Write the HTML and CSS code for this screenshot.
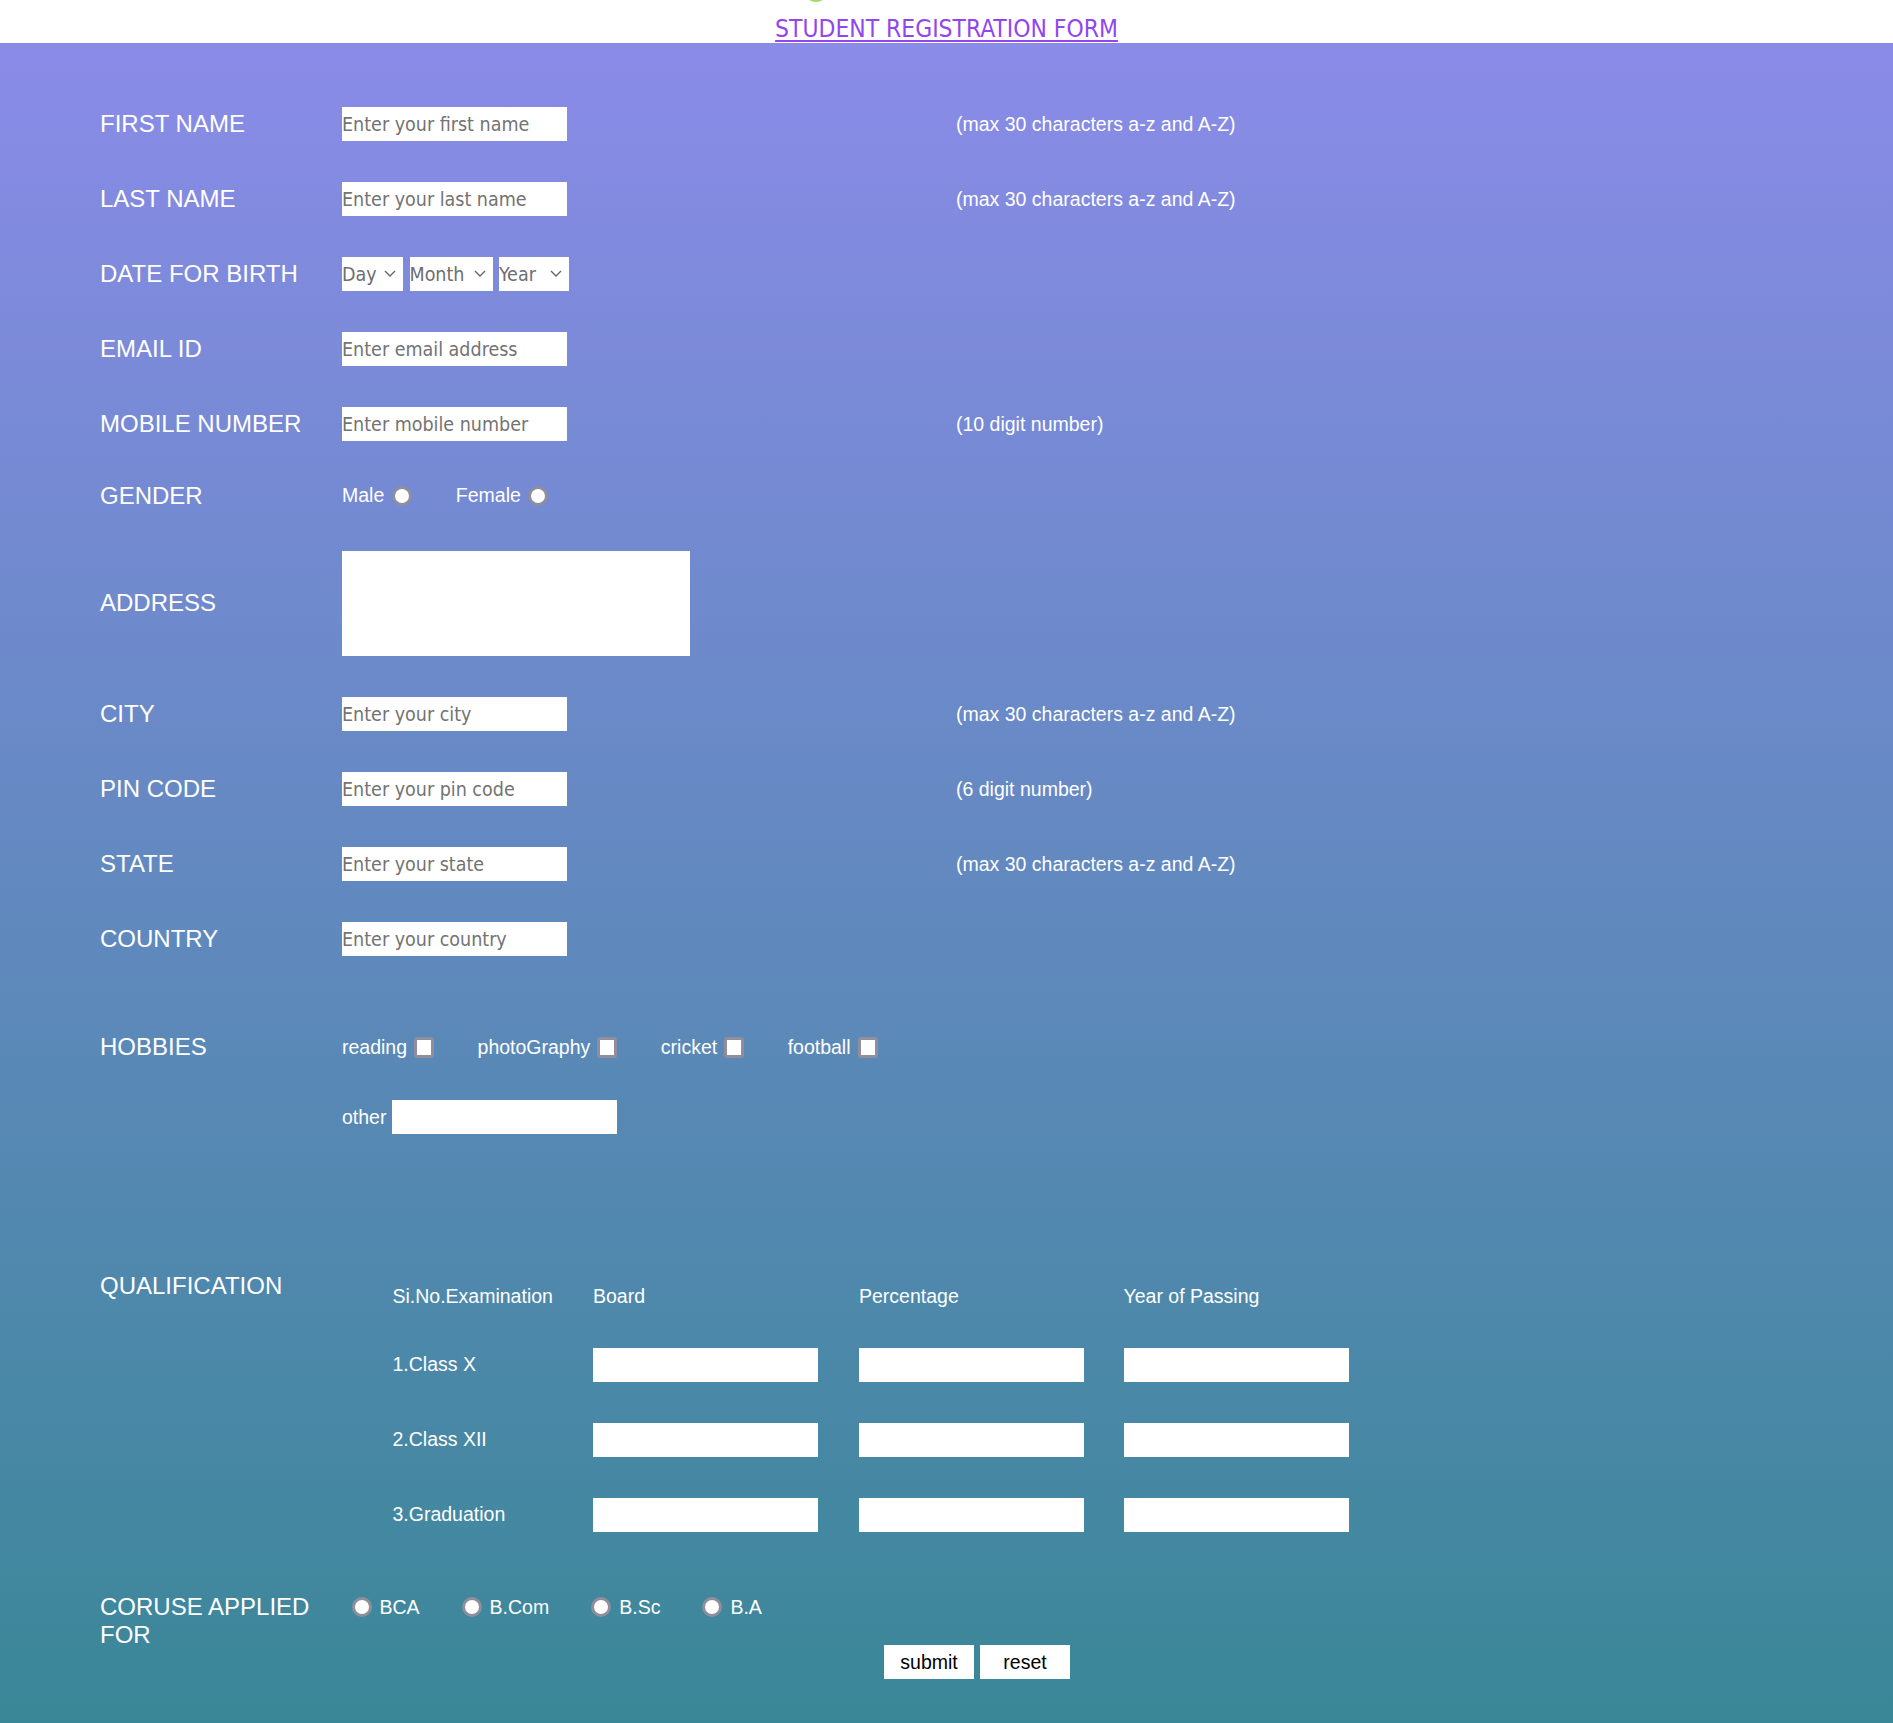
FILE: index.html
```html
<!DOCTYPE html>
<html lang="en">
<head>
<meta charset="utf-8">
<title>Student Registration Form</title>
<link rel="stylesheet" href="styles.css">
</head>
<body>
<header class="top">
  <span class="sliver"></span>
  <a href="#" class="title">STUDENT REGISTRATION FORM</a>
</header>
<form class="reg">
  <div class="row">
    <label class="lbl">FIRST NAME</label>
    <div class="field"><input type="text" class="txt" placeholder="Enter your first name"></div>
    <span class="hint">(max 30 characters a-z and A-Z)</span>
  </div>
  <div class="row">
    <label class="lbl">LAST NAME</label>
    <div class="field"><input type="text" class="txt" placeholder="Enter your last name"></div>
    <span class="hint">(max 30 characters a-z and A-Z)</span>
  </div>
  <div class="row">
    <label class="lbl">DATE FOR BIRTH</label>
    <div class="field dob">
      <div class="sel sel-day">
        <select><option>Day</option><option>1</option><option>2</option><option>3</option></select>
        <svg class="chev" width="12" height="7" viewBox="0 0 12 7"><polyline points="1,1 6,6 11,1" fill="none" stroke="#666" stroke-width="1.4"/></svg>
      </div>
      <div class="sel sel-month">
        <select><option>Month</option><option>Jan</option><option>Feb</option><option>Mar</option></select>
        <svg class="chev" width="12" height="7" viewBox="0 0 12 7"><polyline points="1,1 6,6 11,1" fill="none" stroke="#666" stroke-width="1.4"/></svg>
      </div>
      <div class="sel sel-year">
        <select><option>Year</option><option>2000</option><option>2001</option><option>2002</option></select>
        <svg class="chev" width="12" height="7" viewBox="0 0 12 7"><polyline points="1,1 6,6 11,1" fill="none" stroke="#666" stroke-width="1.4"/></svg>
      </div>
    </div>
    <span class="hint"></span>
  </div>
  <div class="row">
    <label class="lbl">EMAIL ID</label>
    <div class="field"><input type="text" class="txt" placeholder="Enter email address"></div>
    <span class="hint"></span>
  </div>
  <div class="row">
    <label class="lbl">MOBILE NUMBER</label>
    <div class="field"><input type="text" class="txt" placeholder="Enter mobile number"></div>
    <span class="hint">(10 digit number)</span>
  </div>
  <div class="row row-gender">
    <label class="lbl">GENDER</label>
    <div class="field inline">
      <span class="opt">Male</span><input type="radio" name="gender" class="rad rad-after">
      <span class="opt">Female</span><input type="radio" name="gender" class="rad rad-after">
    </div>
    <span class="hint"></span>
  </div>
  <div class="row row-address">
    <label class="lbl">ADDRESS</label>
    <div class="field"><textarea class="area"></textarea></div>
    <span class="hint"></span>
  </div>
  <div class="row">
    <label class="lbl">CITY</label>
    <div class="field"><input type="text" class="txt" placeholder="Enter your city"></div>
    <span class="hint">(max 30 characters a-z and A-Z)</span>
  </div>
  <div class="row">
    <label class="lbl">PIN CODE</label>
    <div class="field"><input type="text" class="txt" placeholder="Enter your pin code"></div>
    <span class="hint">(6 digit number)</span>
  </div>
  <div class="row">
    <label class="lbl">STATE</label>
    <div class="field"><input type="text" class="txt" placeholder="Enter your state"></div>
    <span class="hint">(max 30 characters a-z and A-Z)</span>
  </div>
  <div class="row">
    <label class="lbl">COUNTRY</label>
    <div class="field"><input type="text" class="txt" placeholder="Enter your country"></div>
    <span class="hint"></span>
  </div>
  <div class="row row-hobbies">
    <label class="lbl">HOBBIES</label>
    <div class="field inline hobbies">
      <span class="opt">reading</span><input type="checkbox" class="chk">
      <span class="opt">photoGraphy</span><input type="checkbox" class="chk">
      <span class="opt">cricket</span><input type="checkbox" class="chk">
      <span class="opt">football</span><input type="checkbox" class="chk">
    </div>
    <span class="hint"></span>
  </div>
  <div class="row row-other">
    <span class="lbl"></span>
    <div class="field inline">
      <span class="opt other-lbl">other</span><input type="text" class="txt">
    </div>
    <span class="hint"></span>
  </div>
  <div class="qual">
    <div class="lbl qlbl">QUALIFICATION</div>
    <div class="qtable">
      <div class="qh">Si.No.Examination</div>
      <div class="qh">Board</div>
      <div class="qh">Percentage</div>
      <div class="qh">Year of Passing</div>

      <div class="qc">1.Class X</div>
      <div class="qc"><input type="text" class="txt"></div>
      <div class="qc"><input type="text" class="txt"></div>
      <div class="qc"><input type="text" class="txt"></div>

      <div class="qc">2.Class XII</div>
      <div class="qc"><input type="text" class="txt"></div>
      <div class="qc"><input type="text" class="txt"></div>
      <div class="qc"><input type="text" class="txt"></div>

      <div class="qc">3.Graduation</div>
      <div class="qc"><input type="text" class="txt"></div>
      <div class="qc"><input type="text" class="txt"></div>
      <div class="qc"><input type="text" class="txt"></div>
    </div>
  </div>
  <div class="course">
    <div class="lbl clbl">CORUSE APPLIED FOR</div>
    <div class="cright">
      <div class="opts">
        <input type="radio" name="course" class="rad rad-before first"><span class="copt">BCA</span>
        <input type="radio" name="course" class="rad rad-before"><span class="copt">B.Com</span>
        <input type="radio" name="course" class="rad rad-before"><span class="copt">B.Sc</span>
        <input type="radio" name="course" class="rad rad-before"><span class="copt">B.A</span>
      </div>
      <div class="btns">
        <button type="submit" class="btn">submit</button>
        <button type="reset" class="btn">reset</button>
      </div>
    </div>
  </div>
</form>
</body>
</html>
```
FILE: styles.css
```css
html, body {
  margin: 0;
  padding: 0;
  background: #ffffff;
}

body {
  font-family: "Liberation Sans", Arial, sans-serif;
  color: #ffffff;
}

.top {
  position: relative;
  height: 43px;
  box-sizing: border-box;
  padding-top: 16px;
  text-align: center;
  line-height: 26px;
}

.sliver {
  position: absolute;
  left: 809px;
  top: -4px;
  width: 14px;
  height: 6px;
  border-radius: 50%;
  background: #a9d86e;
}

.title {
  font-family: "DejaVu Sans Condensed", "DejaVu Sans", sans-serif;
  font-stretch: condensed;
  font-size: 24.4px;
  color: #9146ef;
  text-decoration: underline;
  text-decoration-thickness: 2px;
  text-underline-offset: 3px;
}

.reg {
  display: block;
  background: linear-gradient(to bottom, #8a8be8 0%, #3a8797 100%);
  padding: 43px 0 44px 100px;
  box-sizing: border-box;
}

.row {
  display: grid;
  grid-template-columns: 242px 614px auto;
  align-items: center;
  height: 75px;
}

.row-gender { height: 69px; }
.row-address { height: 146px; }
.row-hobbies { height: 74px; margin-top: 34px; }
.row-other { height: 66px; }

.lbl {
  font-size: 24px;
  line-height: 28px;
  color: #ffffff;
}

.hint {
  font-size: 19.5px;
  color: #ffffff;
  padding-top: 1px;
}

.field {
  display: flex;
  align-items: center;
}

.txt {
  width: 225px;
  height: 34px;
  box-sizing: border-box;
  border: none;
  outline: none;
  padding: 1px 0 0 0;
  margin: 0;
  background: #ffffff;
  font-family: "DejaVu Sans Condensed", "DejaVu Sans", sans-serif;
  font-stretch: condensed;
  font-size: 19.5px;
  color: #222;
}

.txt::placeholder {
  color: #737373;
  opacity: 1;
}

.area {
  width: 348px;
  height: 105px;
  box-sizing: border-box;
  border: none;
  outline: none;
  padding: 0;
  margin: 0;
  resize: none;
  background: #ffffff;
  display: block;
}

.dob { gap: 6.5px; }

.sel {
  display: flex;
  align-items: center;
  height: 34px;
  background: #ffffff;
}

.sel-day { width: 61px; }
.sel-month { width: 83px; }
.sel-year { width: 70px; }

.sel select {
  -webkit-appearance: none;
  appearance: none;
  flex: 1;
  min-width: 0;
  height: 34px;
  border: none;
  outline: none;
  background: transparent;
  padding: 1px 0 0 0;
  margin: 0;
  font-family: "DejaVu Sans Condensed", "DejaVu Sans", sans-serif;
  font-stretch: condensed;
  font-size: 19.5px;
  color: #6e6e6e;
}

.chev {
  flex: none;
  margin-right: 7px;
}

.inline .opt {
  font-size: 19.5px;
  color: #ffffff;
}

.rad {
  -webkit-appearance: none;
  appearance: none;
  width: 20px;
  height: 20px;
  box-sizing: border-box;
  border: 3px solid #8e8e9c;
  border-radius: 50%;
  background: #ffffff;
  margin: 0;
  flex: none;
}

.rad-after {
  margin-left: 7.5px;
  margin-right: 44px;
}

.chk {
  -webkit-appearance: none;
  appearance: none;
  width: 20px;
  height: 21px;
  box-sizing: border-box;
  border: 3px solid #8e8e9c;
  border-radius: 3px;
  background: #ffffff;
  margin: 0 43.5px 0 7px;
  flex: none;
}

.other-lbl { margin-right: 6px; }

.qual {
  display: grid;
  grid-template-columns: 242px auto;
  align-items: start;
  margin-top: 122px;
}

.qtable {
  display: grid;
  grid-template-columns: 200.5px 266px 264.5px 225px;
  grid-template-rows: 42px repeat(3, 75px);
  margin-left: 50.5px;
  padding-top: 13px;
}

.qh {
  align-self: start;
  font-size: 19.5px;
  line-height: 22px;
}

.qc {
  align-self: center;
  display: flex;
  align-items: center;
  font-size: 19.5px;
}

.course {
  display: grid;
  grid-template-columns: 242px auto;
  align-items: start;
  margin-top: 41px;
}

.opts {
  display: flex;
  align-items: center;
  height: 28px;
}

.rad-before { margin-right: 8px; }
.rad-before.first { margin-left: 9.5px; }

.copt {
  font-size: 19.5px;
  margin-right: 42px;
}

.btns {
  display: flex;
  gap: 6px;
  margin-top: 24px;
  margin-left: 542px;
}

.btn {
  width: 90px;
  height: 34px;
  border: none;
  padding: 0;
  margin: 0;
  background: #ffffff;
  color: #000000;
  font-family: "Liberation Sans", Arial, sans-serif;
  font-size: 19.5px;
}
```
